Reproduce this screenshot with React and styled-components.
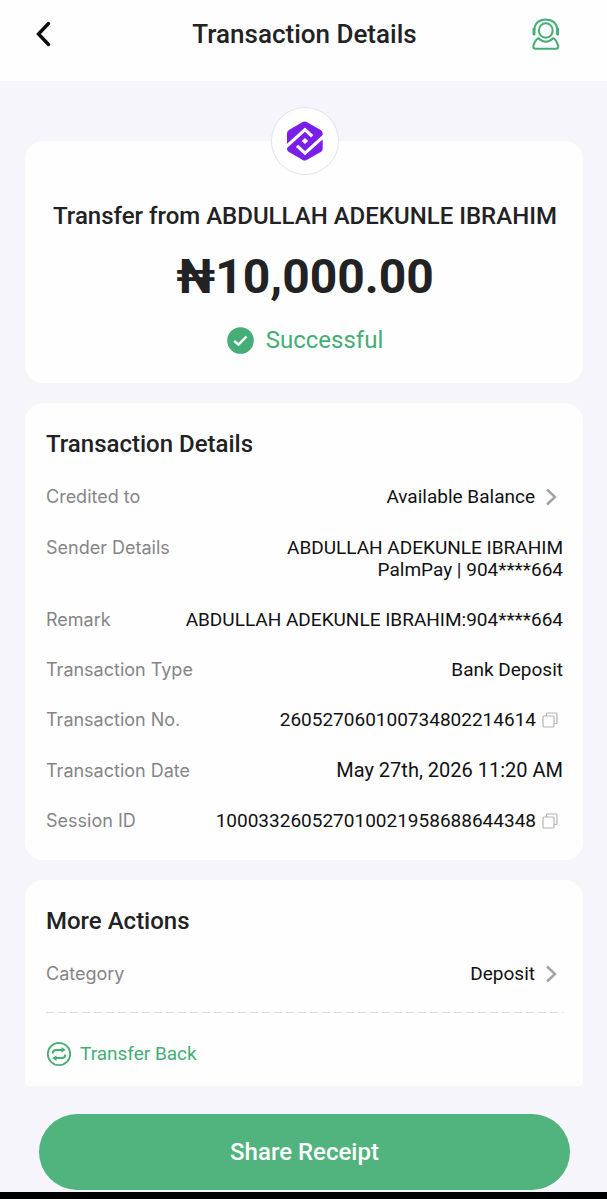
import styled, { createGlobalStyle } from 'styled-components'

const GlobalStyle = createGlobalStyle`
  * {
    box-sizing: border-box;
  }
  body {
    margin: 0;
    background: #f6f5fb;
    color: #222224;
    font-family: Roboto, 'Liberation Sans', sans-serif;
  }
  h1,
  h2,
  p,
  dl,
  dt,
  dd {
    margin: 0;
  }
  button {
    padding: 0;
    border: 0;
    background: none;
    color: inherit;
    font: inherit;
    cursor: pointer;
  }
  svg {
    display: block;
    flex: none;
  }
`

const Page = styled.div`
  display: flex;
  flex-direction: column;
  min-height: 100vh;
`

const Header = styled.header`
  display: grid;
  grid-template-columns: 60px 1fr 40px;
  align-items: center;
  height: 81px;
  padding: 0 47px 13px 29px;
  background: #fefefe;
`

const HeaderTitle = styled.h1`
  text-align: center;
  font-size: 26px;
  font-weight: 500;
  line-height: 32px;
`

const IconButton = styled.button`
  display: flex;
  justify-content: ${({ $align }) => $align || 'center'};
  align-items: center;
`

const Main = styled.main`
  display: flex;
  flex-direction: column;
  gap: 20px;
  padding: 60px 24px 0 25px;
`

const Card = styled.section`
  padding: ${({ $cut }) => ($cut ? '27px 20px 19px 21px' : '27px 20px 28px 21px')};
  border-radius: ${({ $cut }) => ($cut ? '18px 18px 4px 4px' : '18px')};
  background: #fefefe;
`

const SummaryCard = styled(Card)`
  position: relative;
  display: flex;
  flex-direction: column;
  align-items: center;
  padding: 60px 19px 28px 21px;
`

const BankBadge = styled.div`
  position: absolute;
  top: -34px;
  left: 50%;
  display: flex;
  justify-content: center;
  align-items: center;
  width: 68px;
  height: 68px;
  margin-left: -33px;
  border: 1px solid #e3e2ea;
  border-radius: 50%;
  background: #fff;
`

const Sender = styled.p`
  font-size: 24px;
  font-weight: 500;
  line-height: 30px;
`

const Amount = styled.p`
  margin-top: 18px;
  font-size: 48px;
  font-weight: 700;
  line-height: 56px;
`

const Status = styled.p`
  display: flex;
  align-items: center;
  gap: 12px;
  margin-top: 20px;
  color: #45ad76;
  font-size: 24px;
  line-height: 30px;
`

const SectionTitle = styled.h2`
  font-size: 24px;
  font-weight: 500;
  line-height: 28px;
`

const Rows = styled.dl`
  display: flex;
  flex-direction: column;
  gap: 28px;
  margin-top: 27px;
`

const Row = styled.div`
  display: flex;
  justify-content: space-between;
  align-items: baseline;
  gap: 12px;
  line-height: 22px;
`

const Label = styled.dt`
  color: #858588;
  font-family: Inter, Roboto, sans-serif;
  font-size: 18px;
  white-space: nowrap;
`

const Value = styled.dd`
  display: flex;
  align-items: center;
  gap: 6px;
  color: #111113;
  font-size: ${({ $wide }) => ($wide ? '20px' : '19px')};
  text-align: right;
  white-space: pre-line;
`

const ValueButton = styled.button`
  display: flex;
  align-items: center;
  gap: 10px;
  height: 24px;
  padding-right: 6px;
`

const CopyButton = styled(IconButton)`
  height: 22px;
  padding-right: 5px;
`

const Divider = styled.svg`
  width: 100%;
  height: 2px;
  margin-top: 26px;
`

const TransferBack = styled.button`
  display: flex;
  align-items: center;
  gap: 8px;
  margin-top: 27px;
  color: #45ad76;
  font-size: 19px;
  line-height: 24px;
`

const Footer = styled.footer`
  margin-top: auto;
  padding: 27px 37px 2px 39px;
  border-bottom: 7px solid #000;
`

const ShareButton = styled.button`
  width: 100%;
  height: 76px;
  border-radius: 38px;
  background: #51b37d;
  color: #fff;
  font-size: 24px;
  font-weight: 500;
`

function BackIcon() {
  return (
    <svg width="24" height="26" viewBox="0 0 24 26" fill="none" stroke="#0c0c0c" strokeWidth="3.4">
      <path d="M19.5 2.5 9.5 13l10 10.5" strokeLinecap="round" />
    </svg>
  )
}

function SupportIcon() {
  return (
    <svg width="28" height="32" viewBox="0 0 28 32" fill="none" stroke="#45ad76" strokeWidth="2">
      <path d="M2.4 12C2.4 5.500 7 1.500 13.800 1.500S25.200 5.500 25.200 12" />
      <path d="M2 11v5M25.600 11v5" strokeWidth="3" strokeLinecap="round" />
      <ellipse cx="13.800" cy="12.500" rx="6.900" ry="7.200" />
      <path
        d="M6.500 20.200C4 21.700 2.400 24.500 1.500 27.500c-.6 2 .3 3.300 2.200 3.300h20.200c1.900 0 2.800-1.300 2.200-3.300-.9-3-2.500-5.800-5-7.300-2.200 2.200-4.200 3.500-7.300 3.500s-5.100-1.300-7.300-3.500z"
        strokeLinejoin="round"
      />
    </svg>
  )
}

function PalmPayLogo() {
  return (
    <svg width="38" height="40" viewBox="0 0 38 40">
      <path
        d="M16.700 1.100a4 4 0 0 1 4 0l14 7.900a4 4 0 0 1 2 3.500v15a4 4 0 0 1-2 3.500l-14 7.900a4 4 0 0 1-4 0L3 31a4 4 0 0 1-2-3.500v-15A4 4 0 0 1 3 9z"
        fill="#7a1fe8"
      />
      <g fill="none" stroke="#fff" strokeWidth="3.200">
        <path d="M0 25.800 19 8.600l7.200 6.600" />
        <path d="M38 15 19 32.200l-8-7.400" />
      </g>
      <path d="m19 17 3.200 3-3.200 3-3.200-3z" fill="#fff" />
    </svg>
  )
}

function SuccessIcon() {
  return (
    <svg width="27" height="27" viewBox="0 0 27 27">
      <circle cx="13.500" cy="13.500" r="13.300" fill="#45ad76" />
      <path d="m7.200 13.800 4.300 3.900 8-8.200" fill="none" stroke="#fff" strokeWidth="2.400" />
    </svg>
  )
}

function ChevronIcon() {
  return (
    <svg width="12" height="18" viewBox="0 0 12 18" fill="none" stroke="#a2a2a5" strokeWidth="2.400">
      <path d="m2 1.500 8 7.500-8 7.500" />
    </svg>
  )
}

function CopyIcon() {
  return (
    <svg width="16" height="16" viewBox="0 0 16 16" fill="none" stroke="#b4b4b8" strokeWidth="1.200">
      <rect x="1" y="4" width="11" height="11" rx="1" />
      <path d="M4.500 4V2a1 1 0 0 1 1-1H14a1 1 0 0 1 1 1v8.500a1 1 0 0 1-1 1h-2" />
    </svg>
  )
}

function TransferBackIcon() {
  return (
    <svg width="26" height="26" viewBox="0 0 26 26" fill="none" stroke="#45ad76">
      <circle cx="13" cy="13" r="11.200" strokeWidth="1.800" />
      <path d="M6.800 12.500c0-2.300 1.200-3.500 3.500-3.500H18M19.200 13.500c0 2.300-1.200 3.500-3.500 3.500H8" strokeWidth="2" />
      <path d="m15.500 6 4.300 3-4.300 2.600zM10.500 14.400 6.200 17l4.300 3z" fill="#45ad76" stroke="none" />
    </svg>
  )
}

const details = [
  { label: 'Credited to', value: 'Available Balance', type: 'link' },
  { label: 'Sender Details', value: 'ABDULLAH ADEKUNLE IBRAHIM\nPalmPay | 904****664' },
  { label: 'Remark', value: 'ABDULLAH ADEKUNLE IBRAHIM:904****664' },
  { label: 'Transaction Type', value: 'Bank Deposit' },
  { label: 'Transaction No.', value: '260527060100734802214614', type: 'copy' },
  { label: 'Transaction Date', value: 'May 27th, 2026 11:20 AM', type: 'date' },
  { label: 'Session ID', value: '100033260527010021958688644348', type: 'copy' },
]

function DetailRow({ label, value, type }) {
  return (
    <Row>
      <Label>{label}</Label>
      <Value $wide={type === 'date'}>
        {type === 'link' ? (
          <ValueButton type="button">
            {value}
            <ChevronIcon />
          </ValueButton>
        ) : (
          value
        )}
        {type === 'copy' && (
          <CopyButton type="button" aria-label={`Copy ${label}`}>
            <CopyIcon />
          </CopyButton>
        )}
      </Value>
    </Row>
  )
}

export default function App() {
  return (
    <Page>
      <GlobalStyle />
      <Header>
        <IconButton type="button" aria-label="Back" $align="flex-start">
          <BackIcon />
        </IconButton>
        <HeaderTitle>Transaction Details</HeaderTitle>
        <IconButton type="button" aria-label="Customer support" $align="flex-end">
          <SupportIcon />
        </IconButton>
      </Header>
      <Main>
        <SummaryCard>
          <BankBadge>
            <PalmPayLogo />
          </BankBadge>
          <Sender>Transfer from ABDULLAH ADEKUNLE IBRAHIM</Sender>
          <Amount>₦10,000.00</Amount>
          <Status>
            <SuccessIcon />
            Successful
          </Status>
        </SummaryCard>
        <Card>
          <SectionTitle>Transaction Details</SectionTitle>
          <Rows>
            {details.map((detail) => (
              <DetailRow key={detail.label} {...detail} />
            ))}
          </Rows>
        </Card>
        <Card $cut>
          <SectionTitle>More Actions</SectionTitle>
          <Rows>
            <DetailRow label="Category" value="Deposit" type="link" />
          </Rows>
          <Divider aria-hidden="true">
            <line x1="0" y1="0.5" x2="100%" y2="0.5" stroke="#dcdcdf" strokeWidth="1" strokeDasharray="8 4" />
          </Divider>
          <TransferBack type="button">
            <TransferBackIcon />
            Transfer Back
          </TransferBack>
        </Card>
      </Main>
      <Footer>
        <ShareButton type="button">Share Receipt</ShareButton>
      </Footer>
    </Page>
  )
}
